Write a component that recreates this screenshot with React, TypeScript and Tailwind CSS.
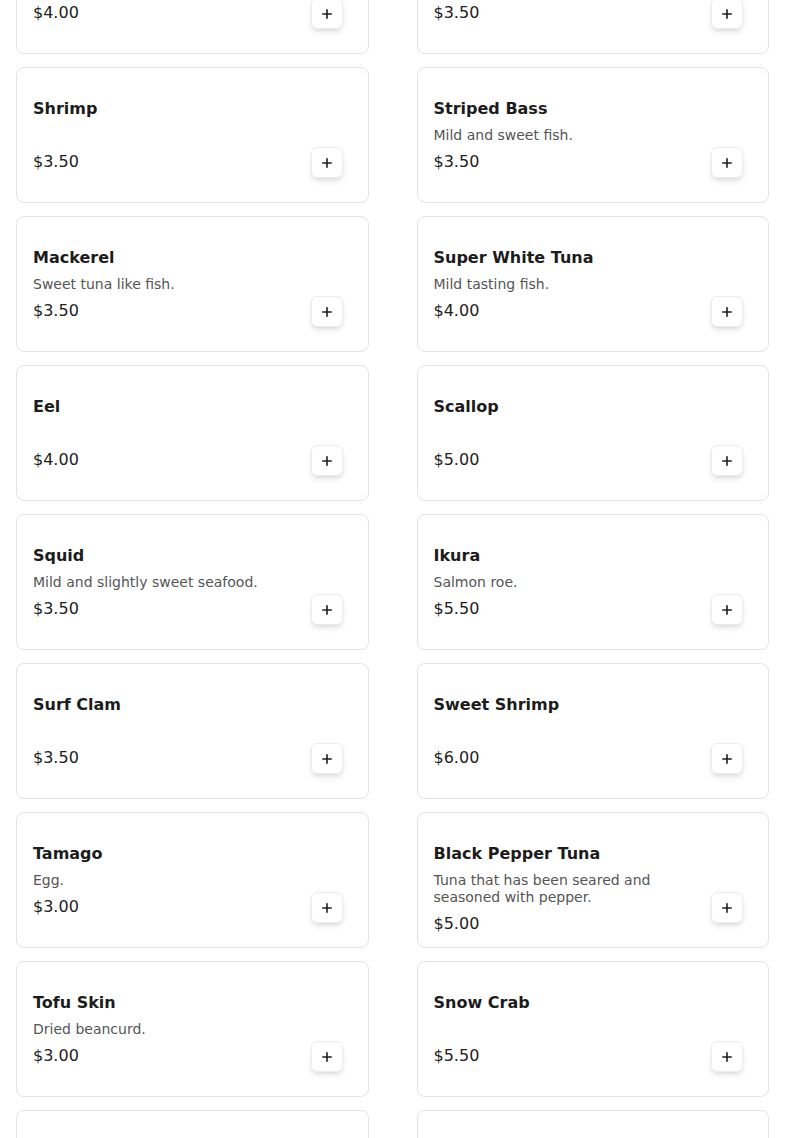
import React from 'react';

interface MenuItem {
    name: string;
    description?: string;
    price: string;
}

const items: MenuItem[] = [
    { name: 'Yellowtail', description: 'Rich and buttery fish.', price: '$4.00' },
    { name: 'Salmon', description: 'Fatty and mild fish.', price: '$3.50' },
    { name: 'Shrimp', price: '$3.50' },
    { name: 'Striped Bass', description: 'Mild and sweet fish.', price: '$3.50' },
    { name: 'Mackerel', description: 'Sweet tuna like fish.', price: '$3.50' },
    { name: 'Super White Tuna', description: 'Mild tasting fish.', price: '$4.00' },
    { name: 'Eel', price: '$4.00' },
    { name: 'Scallop', price: '$5.00' },
    { name: 'Squid', description: 'Mild and slightly sweet seafood.', price: '$3.50' },
    { name: 'Ikura', description: 'Salmon roe.', price: '$5.50' },
    { name: 'Surf Clam', price: '$3.50' },
    { name: 'Sweet Shrimp', price: '$6.00' },
    { name: 'Tamago', description: 'Egg.', price: '$3.00' },
    { name: 'Black Pepper Tuna', description: 'Tuna that has been seared and seasoned with pepper.', price: '$5.00' },
    { name: 'Tofu Skin', description: 'Dried beancurd.', price: '$3.00' },
    { name: 'Snow Crab', price: '$5.50' },
    { name: 'Octopus', description: 'Chewy and mild seafood.', price: '$3.50' },
    { name: 'Sea Urchin', description: 'Rich and creamy.', price: '$7.00' },
];

const PlusIcon: React.FC = () => (
    <svg width="10" height="10" viewBox="0 0 10 10" fill="none" stroke="#1f1f1f" strokeWidth="1.6" strokeLinecap="round">
        <path d="M5 0.8v8.4M0.8 5h8.4" />
    </svg>
);

const MenuCard: React.FC<{ item: MenuItem }> = ({ item }) => (
    <div className="h-[136px] bg-white border border-[#e3e3e3] rounded-lg flex justify-between pl-4 pr-[25px] pt-[29px]">
        <div className="flex flex-col pr-4">
            <h3 className="text-base leading-6 font-bold text-[#1c1c1c]">{item.name}</h3>
            <p className="mt-[6px] min-h-[17px] text-sm leading-[17px] text-[#555555]">{item.description}</p>
            <p className="mt-[6px] text-base leading-6 text-[#222222]">{item.price}</p>
        </div>
        <button className="shrink-0 mt-[50px] w-8 h-[31px] flex items-center justify-center bg-white border border-[#ececec] rounded-md shadow-md">
            <PlusIcon />
        </button>
    </div>
);

export default function App() {
    return (
        <div className="h-screen overflow-hidden bg-white" style={{ fontFamily: '"DejaVu Sans", sans-serif' }}>
            <div className="-mt-[82px] px-4 grid grid-cols-2 gap-x-12 gap-y-[13px]">
                {items.map((item) => (
                    <MenuCard key={item.name} item={item} />
                ))}
            </div>
        </div>
    );
}
